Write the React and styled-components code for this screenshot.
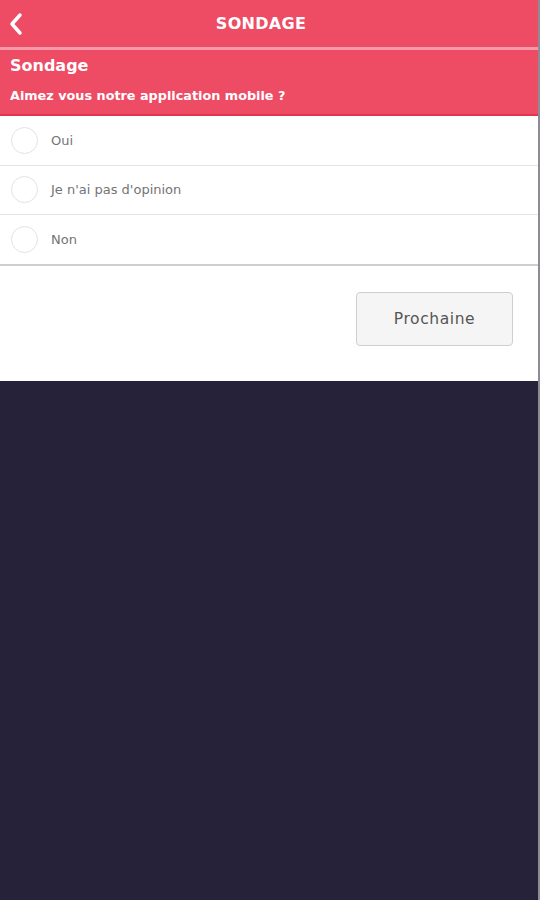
import React, { useState } from 'react';
import styled, { createGlobalStyle } from 'styled-components';

const GlobalStyle = createGlobalStyle`
  html, body {
    margin: 0;
    padding: 0;
    background: #25223a;
    font-family: "DejaVu Sans", "Open Sans", sans-serif;
  }
`;

// styled-components
const Screen = styled.div`
  width: 538px;
  min-height: 900px;
  display: flex;
  flex-direction: column;
  background: #25223a;
  border-right: 2px solid #8d8c96;
`;

const TopBar = styled.header`
  height: 47px;
  display: flex;
  align-items: center;
  justify-content: center;
  position: relative;
  padding-right: 16px;
  background: #ee4b65;
  border-bottom: 3px solid #f59aa8;
  color: #fff;
`;

const BackButton = styled.button`
  position: absolute;
  left: 4px;
  top: 10px;
  width: 24px;
  height: 28px;
  padding: 0;
  border: none;
  background: none;
  display: flex;
  align-items: center;
  justify-content: center;
  cursor: pointer;
`;

const Title = styled.h1`
  margin: 0;
  font-size: 16px;
  font-weight: 700;
  letter-spacing: 0.3px;
`;

const Intro = styled.section`
  background: #ee4b65;
  padding: 5px 10px 0;
  height: 59px;
  border-bottom: 2px solid #e2334f;
  color: #fff;
`;

const IntroTitle = styled.h2`
  margin: 0;
  font-size: 16px;
  font-weight: 700;
  line-height: 22px;
`;

const Question = styled.p`
  margin: 10px 0 0;
  font-size: 12.8px;
  font-weight: 700;
  line-height: 18px;
`;

const Options = styled.ul`
  list-style: none;
  margin: 0;
  padding: 0;
  background: #fff;
  border-bottom: 2px solid #cfcfcf;
`;

const Option = styled.li`
  height: 48.5px;
  display: flex;
  align-items: center;
  gap: 13px;
  padding-left: 11px;
  border-top: ${p => (p.$first ? 'none' : '1px solid #e4e4e4')};
  cursor: pointer;
`;

const Radio = styled.span`
  width: 27px;
  height: 27px;
  border-radius: 50%;
  border: 1.5px solid ${p => (p.$checked ? '#ee4b65' : '#e2e2e2')};
  box-sizing: border-box;
  display: flex;
  align-items: center;
  justify-content: center;

  &::after {
    content: '';
    width: 14px;
    height: 14px;
    border-radius: 50%;
    background: ${p => (p.$checked ? '#ee4b65' : 'transparent')};
  }
`;

const OptionLabel = styled.span`
  font-size: 13px;
  color: #747474;
`;

const Footer = styled.div`
  height: 115px;
  background: #fff;
  display: flex;
  justify-content: flex-end;
  align-items: flex-start;
  padding: 26px 25px 0 0;
  box-sizing: border-box;
`;

const NextButton = styled.button`
  width: 157px;
  height: 54px;
  background: #f5f5f5;
  border: 1px solid #cfcfcf;
  border-radius: 4px;
  font-family: inherit;
  font-size: 15.5px;
  letter-spacing: 0.6px;
  color: #555;
  cursor: pointer;
`;
// end styled-components

const choices = ['Oui', "Je n'ai pas d'opinion", 'Non'];

const App = () => {
  const [answer, setAnswer] = useState(null);

  return (
    <>
      <GlobalStyle />
      <Screen>
        <TopBar>
          <BackButton aria-label='Retour'>
            <svg width='16' height='24' viewBox='0 0 16 24'>
              <path d='M12 3 L4 12 L12 21' fill='none' stroke='#fff' strokeWidth='3.5' strokeLinecap='round' strokeLinejoin='round' />
            </svg>
          </BackButton>
          <Title>SONDAGE</Title>
        </TopBar>
        <Intro>
          <IntroTitle>Sondage</IntroTitle>
          <Question>Aimez vous notre application mobile ?</Question>
        </Intro>
        <Options>
          {choices.map((c, i) => (
            <Option key={c} $first={i === 0} onClick={() => setAnswer(c)}>
              <Radio $checked={answer === c} />
              <OptionLabel>{c}</OptionLabel>
            </Option>
          ))}
        </Options>
        <Footer>
          <NextButton>Prochaine</NextButton>
        </Footer>
      </Screen>
    </>
  );
};

export default App;
